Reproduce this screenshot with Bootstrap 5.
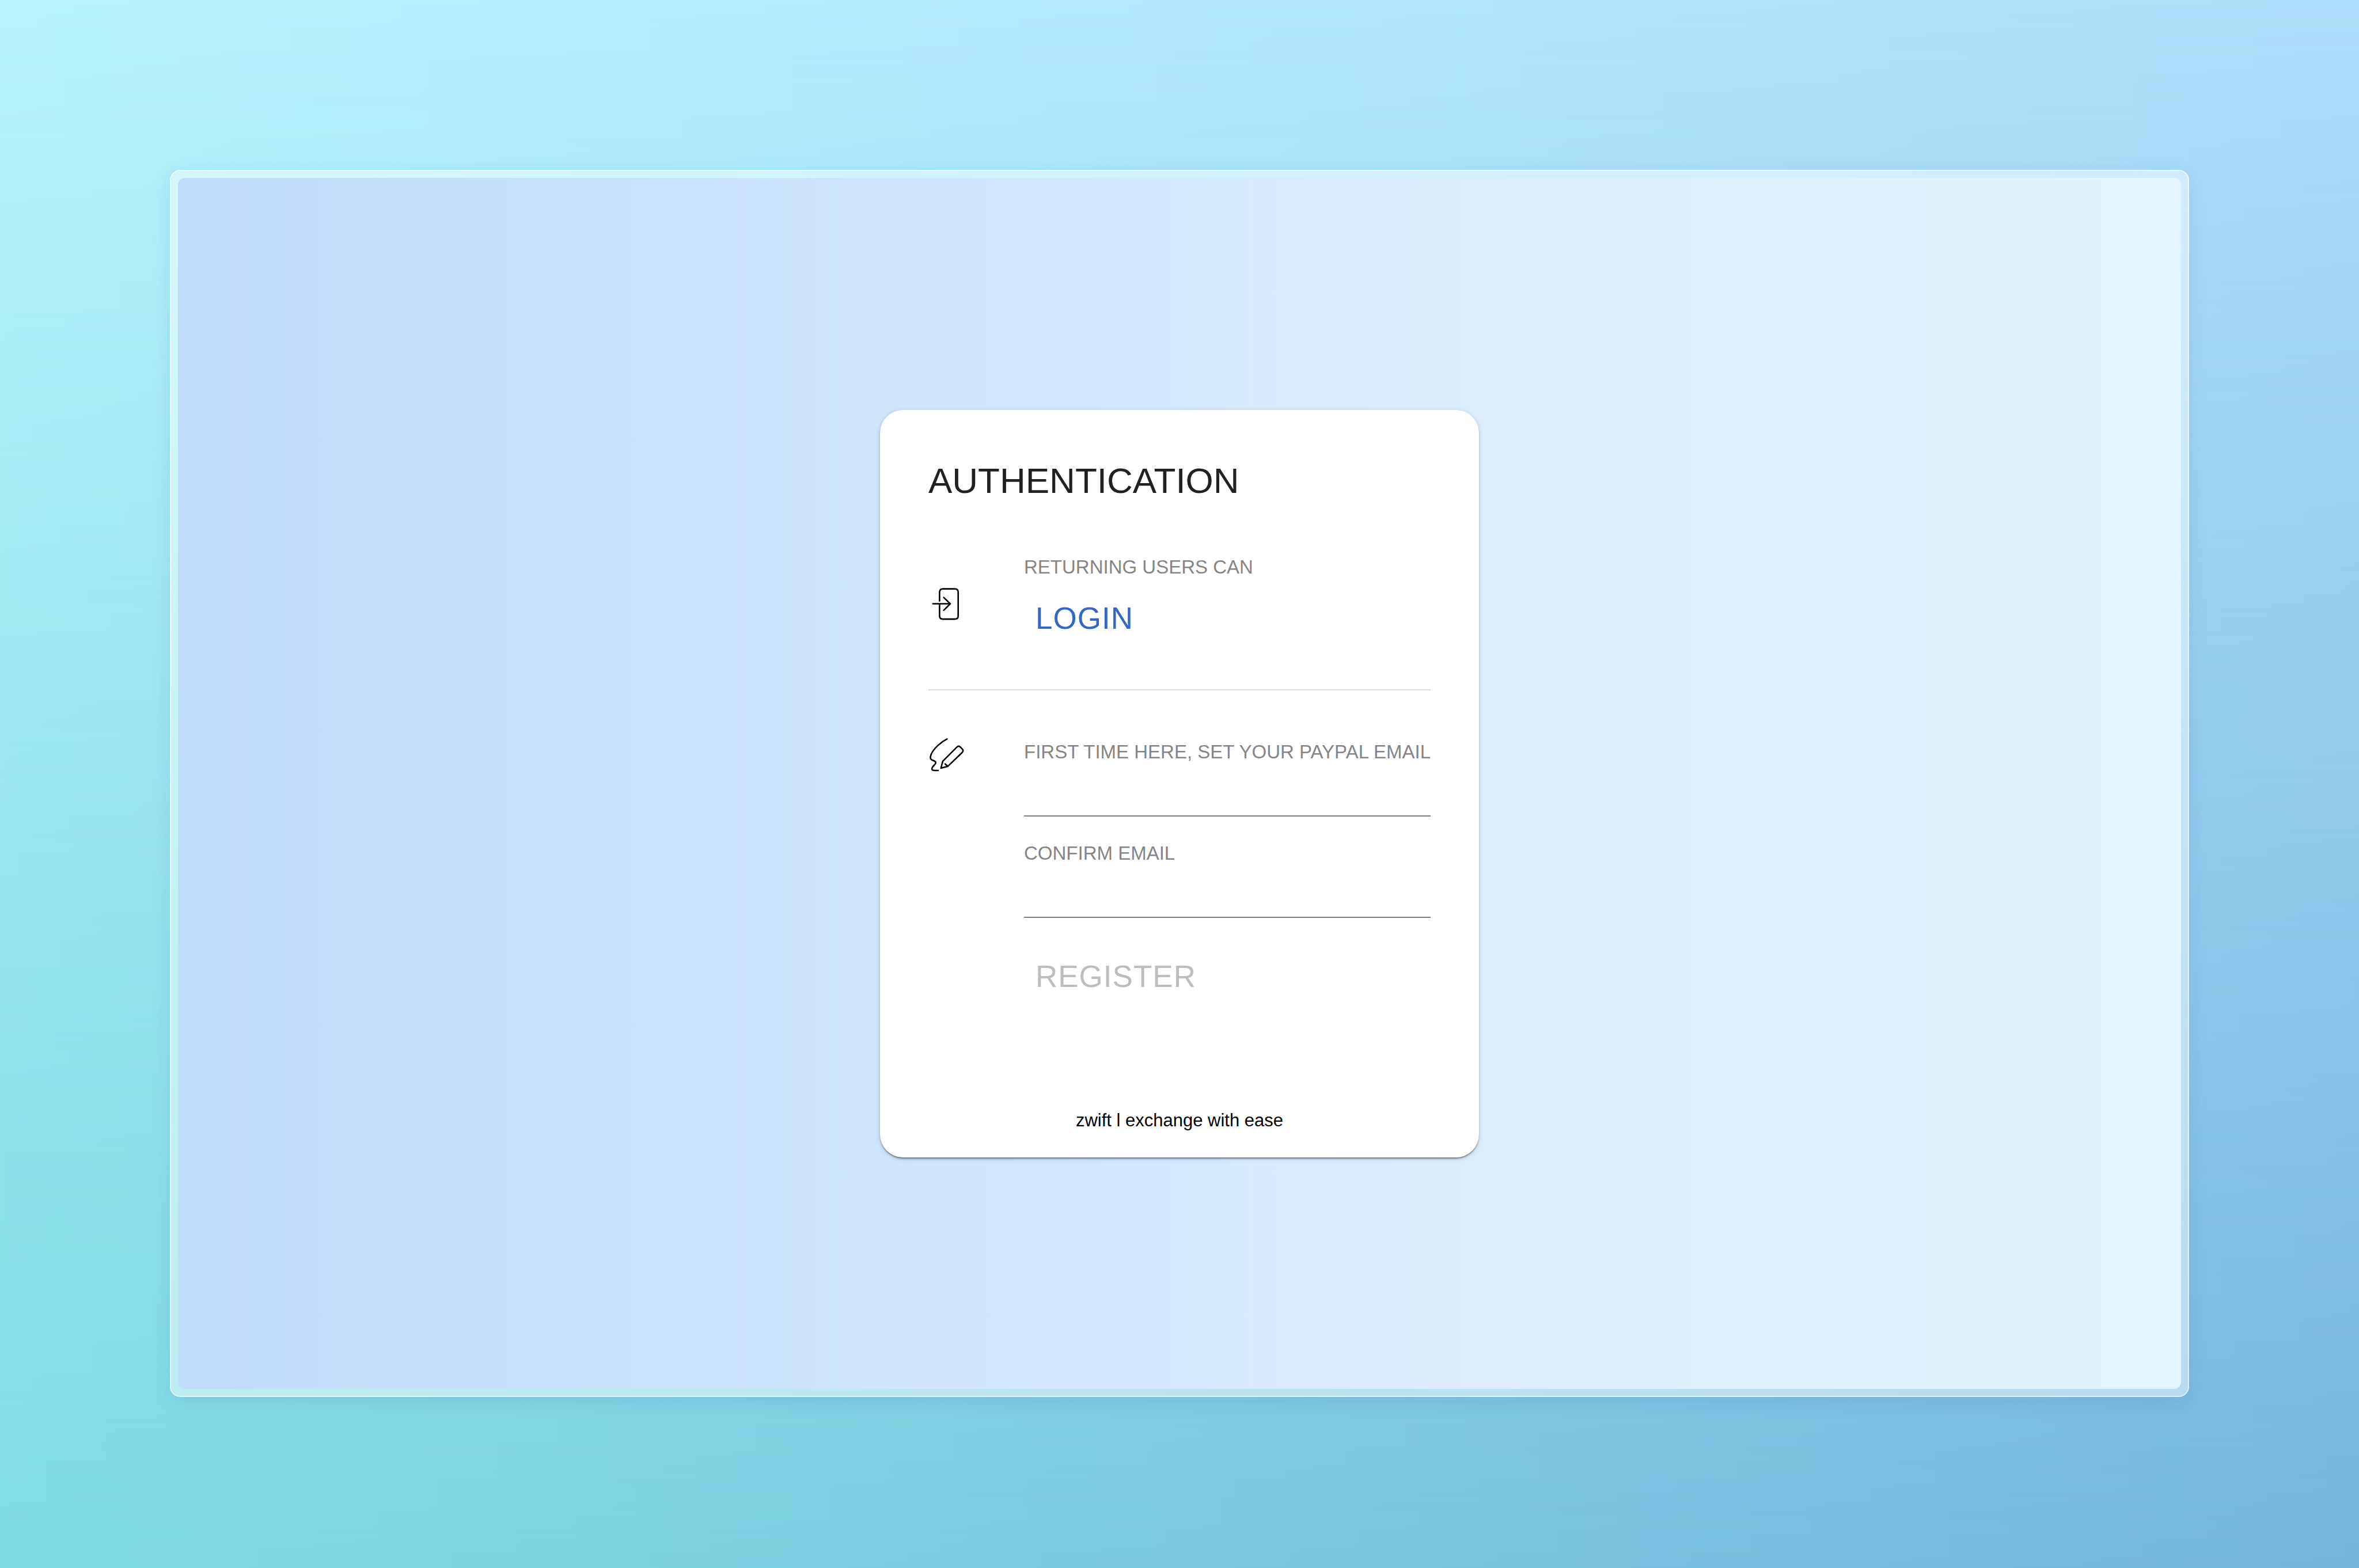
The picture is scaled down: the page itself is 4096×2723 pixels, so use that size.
<!DOCTYPE html>
<html lang="en">
<head>
<meta charset="utf-8">
<meta name="viewport" content="width=device-width, initial-scale=1">
<title>zwift l Authentication</title>
<link href="https://cdn.jsdelivr.net/npm/bootstrap@5.3.0/dist/css/bootstrap.min.css" rel="stylesheet">
<style>
body {
  font-family: "Liberation Sans", Arial, sans-serif;
  padding: 295px 295px 297px;
  background: linear-gradient(90deg, #b7f4fb, #addffb);
}
/* darker shade of the same sweep, fading in towards the foot of the page */
body::before {
  content: "";
  position: fixed;
  inset: 0;
  z-index: -1;
  background: linear-gradient(90deg, #7edce1, #74b5de);
  -webkit-mask-image: linear-gradient(to bottom, transparent, #000);
  mask-image: linear-gradient(to bottom, transparent, #000);
}
.glass {
  padding: 12px;
  border: 2px solid rgba(255,255,255,.75);
  border-radius: 18px;
  background: rgba(255,255,255,.46);
  background-clip: padding-box;
  box-shadow: 0 8px 32px rgba(31,38,135,.1);
}
.stage {
  border-radius: 12px;
  background: linear-gradient(90deg, #c1dcf8 0%, #d3e8fc 50%, #d8eafa 54%, #e3f4fd 100%);
}
.auth-card {
  min-width: 1040px;
  padding: 83px 84px 44px;
  border: 0;
  border-radius: 40px;
  box-shadow: 0 3px 3px -1px rgba(0,0,0,.45), 0 2px 8px rgba(0,0,0,.15);
}
.auth-title { margin: 0 0 90px; font-size: 62px; line-height: 80px; color: #212121; }
.auth-step { gap: 103px; }
.auth-icon { width: 63px; height: 63px; }
.auth-label { font-size: 33px; line-height: 40px; color: #858585; }
.auth-fields { padding-top: 7px; }
.auth-btn {
  --bs-btn-padding-x: 20px;
  --bs-btn-padding-y: 28px;
  --bs-btn-font-size: 53px;
  --bs-btn-line-height: 60px;
  --bs-btn-color: #3367c4;
  --bs-btn-disabled-color: #bdbdbd;
  --bs-btn-disabled-opacity: 1;
  --bs-btn-disabled-border-color: transparent;
  --bs-btn-border-width: 0;
  letter-spacing: 1px;
}
.auth-login { margin-top: 11px; }
.auth-rule { margin: 65px 0 80px; border-top: 2px solid #dcdcdc; opacity: 1; }
.auth-input {
  height: 92px;
  margin-bottom: 44px;
  padding: 0;
  font-size: 48px;
  border: 0;
  border-bottom: 2px solid #7c7c7c;
  border-radius: 0;
}
.auth-foot { margin-top: 172px; font-size: 31px; line-height: 40px; color: #000; }
</style>
</head>
<body class="d-flex min-vh-100">
<main class="glass d-flex flex-grow-1">
  <div class="stage d-flex flex-grow-1 align-items-center justify-content-center">
    <section class="card auth-card">
      <h1 class="auth-title fw-normal">AUTHENTICATION</h1>
      <div class="auth-step d-flex align-items-center">
        <svg class="auth-icon flex-shrink-0" viewBox="0 0 78 78" fill="none" stroke="#000" stroke-width="3.2" stroke-linecap="round" stroke-linejoin="round" aria-hidden="true">
          <path d="M24 33V14q0-7 7-7H57q7 0 7 7V65q0 7-7 7H31q-7 0-7-7V39M9.500 39H47M33 25.500 47 39 33 53"/>
        </svg>
        <div class="d-flex flex-column align-items-start">
          <span class="auth-label">RETURNING USERS CAN</span>
          <button type="button" class="btn auth-btn auth-login">LOGIN</button>
        </div>
      </div>
      <hr class="auth-rule">
      <form class="auth-step d-flex align-items-start">
        <svg class="auth-icon flex-shrink-0" viewBox="0 0 78 78" fill="none" stroke="#000" stroke-width="3.2" stroke-linecap="round" stroke-linejoin="round" aria-hidden="true">
          <path d="M40 5.500C27 12 12 25 6 38C3 46 4 49 9 51C16 53 18 56 13 61C6 68 5 73 14 73H21M27 68 31 53 61 23Q65 19 69 23L73 27Q76 30 73 34L42 64ZM36 59 42 64"/>
        </svg>
        <div class="auth-fields flex-grow-1 d-flex flex-column align-items-start">
          <label class="auth-label" for="email">FIRST TIME HERE, SET YOUR PAYPAL EMAIL</label>
          <input class="form-control auth-input" id="email" type="email">
          <label class="auth-label" for="confirm">CONFIRM EMAIL</label>
          <input class="form-control auth-input" id="confirm" type="email">
          <button type="submit" class="btn auth-btn" disabled>REGISTER</button>
        </div>
      </form>
      <footer class="auth-foot text-center">zwift l exchange with ease</footer>
    </section>
  </div>
</main>
<script src="https://cdn.jsdelivr.net/npm/bootstrap@5.3.0/dist/js/bootstrap.bundle.min.js"></script>
</body>
</html>
